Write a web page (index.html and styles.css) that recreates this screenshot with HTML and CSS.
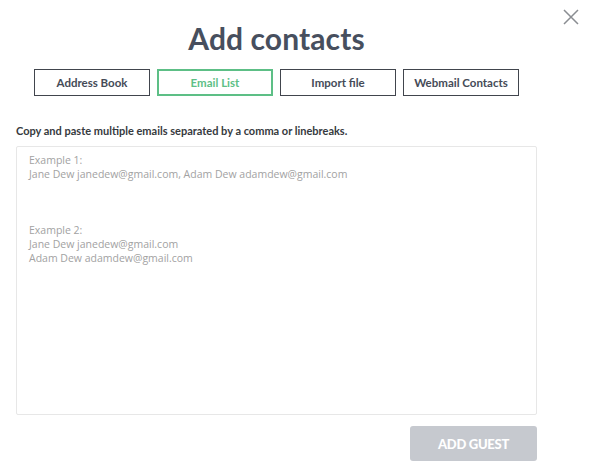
FILE: index.html
```html
<!DOCTYPE html>
<html>
<head>
<meta charset="utf-8">
<link rel="stylesheet" href="styles.css">
</head>
<body>
<div class="modal">
  <button class="close" aria-label="Close">
    <svg width="16" height="16" viewBox="0 0 16 16"><path d="M1 1L15 15M15 1L1 15" stroke="#8a8d92" stroke-width="1.5" fill="none"/></svg>
  </button>
  <div class="content">
    <h1 class="title">Add contacts</h1>
    <div class="tabs">
      <div class="tab">Address Book</div>
      <div class="tab active">Email List</div>
      <div class="tab">Import file</div>
      <div class="tab">Webmail Contacts</div>
    </div>
    <p class="label">Copy and paste multiple emails separated by a comma or linebreaks.</p>
    <textarea class="emails" placeholder="Example 1:
Jane Dew janedew@gmail.com, Adam Dew adamdew@gmail.com



Example 2:
Jane Dew janedew@gmail.com
Adam Dew adamdew@gmail.com"></textarea>
    <div class="actions">
      <button class="add">ADD GUEST</button>
    </div>
  </div>
</div>
</body>
</html>
```
FILE: styles.css
```css
* { box-sizing: border-box; }
html, body { margin: 0; padding: 0; background: #fff; }
body { font-family: Lato, "Open Sans", sans-serif; width: 590px; height: 474px; overflow: hidden; }
.modal { position: relative; width: 590px; height: 474px; }
.close { position: absolute; top: 9px; right: 11px; width: 16px; height: 16px; padding: 0; border: 0; background: none; }
.close svg { display: block; }
.content { width: 553px; padding: 0 16px; display: flex; flex-direction: column; }
.title { margin: 0; padding-top: 20px; height: 69px; text-align: center; font-size: 30px; font-weight: 700; color: #474f5e; line-height: 36px; letter-spacing: 0.1px; }
.tabs { display: flex; gap: 7px; margin-left: 18px; }
.tab { width: 116px; height: 27px; border: 1px solid #41454d; display: flex; align-items: center; justify-content: center; font-size: 11.5px; font-weight: 700; color: #454b57; }
.tab.active { border: 2px solid #5dbf86; color: #5dbf86; }
.label { margin: 28px 0 0; font-size: 11px; font-weight: 700; color: #363a40; line-height: 14px; }
.emails { margin-top: 8px; width: 521px; height: 269px; border: 1px solid #e7e7e7; border-radius: 2px; padding: 6px 12px; resize: none; font-family: "Open Sans", Lato, sans-serif; font-size: 10.5px; line-height: 14px; color: #333; }
.emails::placeholder { color: #a2a2a2; opacity: 1; }
.actions { display: flex; justify-content: flex-end; margin-top: 11px; }
.add { width: 127px; height: 35px; border: 0; border-radius: 3px; background: #c6c9cf; color: #fff; font-family: Lato, sans-serif; font-weight: 900; font-size: 13px; letter-spacing: -0.3px; }
```
